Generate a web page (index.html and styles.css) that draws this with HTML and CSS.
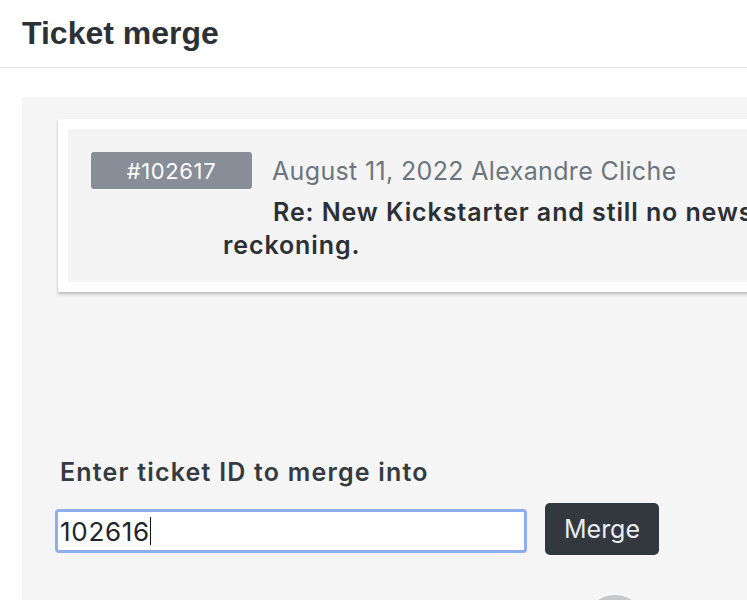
FILE: index.html
```html
<!DOCTYPE html>
<html>
<head>
<meta charset="utf-8">
<link rel="stylesheet" href="styles.css">
</head>
<body>
<header class="page-header">
  <h1 class="page-title">Ticket merge</h1>
</header>
<main class="panel">
  <div class="ticket-card">
    <div class="ticket-inner">
      <div class="ticket-meta">
        <span class="ticket-badge">#102617</span>
        <span class="ticket-date">August 11, 2022 Alexandre Cliche</span>
      </div>
      <div class="ticket-subject">Re: New Kickstarter and still no news for day of<br>reckoning.</div>
    </div>
  </div>
  <form class="merge-form">
    <label class="merge-label" for="tid">Enter ticket ID to merge into</label>
    <div class="merge-row">
      <div class="merge-input" id="tid">102616<span class="caret"></span></div>
      <button type="button" class="merge-btn">Merge</button>
    </div>
  </form>
  <div class="spinner-row"><div class="spinner"></div></div>
</main>
</body>
</html>
```
FILE: styles.css
```css
html, body {
  margin: 0;
  padding: 0;
  height: 600px;
  overflow: hidden;
  background: #fff;
  font-family: Inter, "Noto Sans", sans-serif;
}
.page-header {
  height: 67px;
  border-bottom: 1px solid #e4e4e4;
  padding: 0 22px;
}
.page-title {
  margin: 0;
  padding-top: 13px;
  font-family: "Liberation Sans", Arial, sans-serif;
  font-size: 32px;
  font-weight: bold;
  color: #2c3136;
  line-height: 40px;
}
.panel {
  margin: 29px 0 0 22px;
  background: #f5f5f5;
  padding: 22px 0 0 36px;
  height: 600px;
  width: 900px;
}
.ticket-card {
  width: 860px;
  border: 10px solid #fff;
  background: #f4f4f4;
  box-shadow: 0 2px 3px rgba(0,0,0,0.25);
}
.ticket-inner {
  padding: 23px 0 20px 23px;
}
.ticket-meta {
  display: flex;
  align-items: center;
  gap: 20px;
}
.ticket-badge {
  width: 161px;
  height: 37px;
  background: #878e98;
  color: #fff;
  border-radius: 3px;
  display: flex;
  align-items: center;
  justify-content: center;
  font-size: 22px;
  letter-spacing: 0.6px;
}
.ticket-date {
  color: #6c757d;
  font-size: 25px;
  letter-spacing: 0.35px;
}
.ticket-subject {
  margin: 7px 0 0 132px;
  text-indent: 50px;
  font-size: 25px;
  font-weight: 600;
  letter-spacing: 0.9px;
  line-height: 33px;
  color: #2b3035;
}
.merge-form {
  margin-top: 165px;
  padding-left: 2px;
}
.merge-label {
  display: block;
  font-size: 25px;
  font-weight: 600;
  letter-spacing: 1.2px;
  color: #343a40;
  line-height: 30px;
}
.merge-row {
  display: flex;
  align-items: flex-start;
  gap: 18px;
  margin-top: 16px;
  margin-left: -5px;
}
.merge-input {
  margin-top: 6px;
  width: 464px;
  height: 38px;
  border: 3px solid #8eaef0;
  border-radius: 4px;
  background: #fff;
  display: flex;
  align-items: center;
  padding-left: 2px;
  font-size: 26px;
  letter-spacing: 0.7px;
  color: #212529;
}
.caret {
  display: inline-block;
  width: 1.5px;
  height: 28px;
  background: #111;
}
.merge-btn {
  width: 114px;
  height: 52px;
  border: 0;
  border-radius: 5px;
  background: #32383e;
  color: #e9ecef;
  font-family: Inter, "Noto Sans", sans-serif;
  font-size: 25px;
}
.spinner-row {
  padding-left: 527px;
  margin-top: 40px;
}
.spinner {
  width: 60px;
  height: 60px;
  border-radius: 50%;
  background: #c6c8ca;
}
```
